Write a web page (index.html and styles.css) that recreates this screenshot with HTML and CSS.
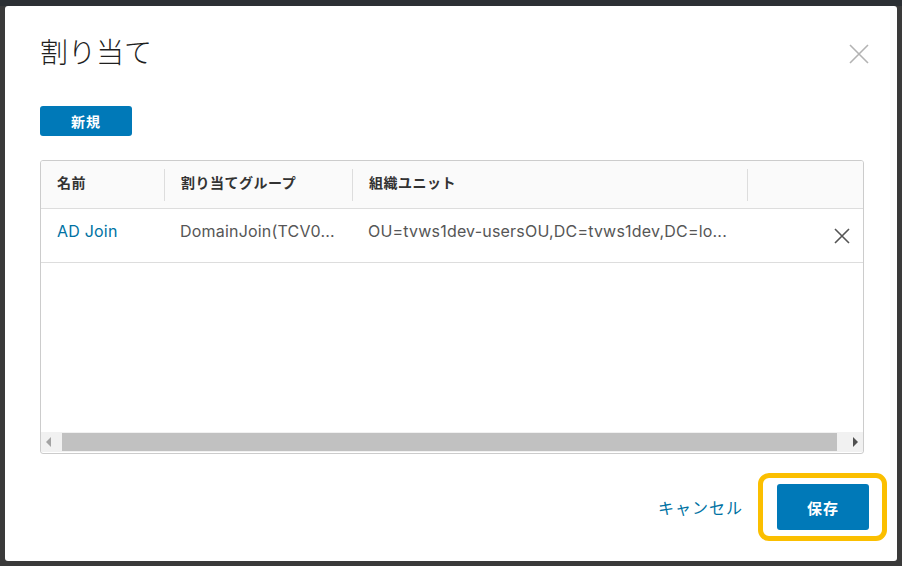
FILE: index.html
```html
<!DOCTYPE html>
<html lang="ja">
<head>
<meta charset="utf-8">
<title>割り当て</title>
<link rel="stylesheet" href="styles.css">
</head>
<body>
<div class="backdrop">
  <div class="dialog">
    <div class="dialog-header">
      <h1 class="title">割り当て</h1>
      <button class="close" aria-label="閉じる">
        <svg width="20" height="20" viewBox="0 0 20 20"><path d="M1 1L19 19M19 1L1 19" stroke="#b3b3b3" stroke-width="1.6" fill="none"/></svg>
      </button>
    </div>
    <div class="dialog-body">
      <button class="btn btn-small">新規</button>
      <div class="grid">
        <div class="grid-head">
          <div class="cell c1">名前</div>
          <div class="cell c2 sep">割り当てグループ</div>
          <div class="cell c3 sep">組織ユニット</div>
          <div class="cell c4 sep"></div>
        </div>
        <div class="grid-row">
          <div class="cell c1"><a class="link">AD Join</a></div>
          <div class="cell c2">DomainJoin(TCV0...</div>
          <div class="cell c3">OU=tvws1dev-usersOU,DC=tvws1dev,DC=lo...</div>
          <div class="cell c4 act">
            <svg width="16" height="16" viewBox="0 0 16 16"><path d="M1 1L15 15M15 1L1 15" stroke="#555" stroke-width="1.6" fill="none"/></svg>
          </div>
        </div>
        <div class="grid-fill"></div>
        <div class="hscroll">
          <span class="arrow left"></span>
          <span class="thumb"></span>
          <span class="arrow right"></span>
        </div>
      </div>
    </div>
    <div class="dialog-footer">
      <a class="link cancel">キャンセル</a>
      <div class="highlight">
        <button class="btn btn-save">保存</button>
      </div>
    </div>
  </div>
</div>
</body>
</html>
```
FILE: styles.css
```css
* { box-sizing: border-box; }
html, body { margin: 0; padding: 0; }
body {
  background: #3a3a3a;
  font-family: "Inter", "Noto Sans CJK JP", sans-serif;
  width: 902px;
  height: 566px;
  overflow: hidden;
}
.backdrop {
  width: 902px;
  height: 566px;
  padding: 6px 5px 5px 5px;
  background: linear-gradient(#2c3034 0, #2c3034 6px, #3a3a3a 6px);
}
.dialog {
  width: 892px;
  height: 555px;
  background: #fff;
  border-radius: 3px;
  padding: 0 33px 0 35px;
  display: flex;
  flex-direction: column;
}
.dialog-header {
  display: flex;
  justify-content: space-between;
  align-items: flex-start;
  padding-top: 26px;
}
.title {
  margin: 0;
  font-family: "Noto Sans CJK JP", sans-serif;
  font-weight: 300;
  font-size: 28px;
  line-height: 38px;
  color: #1f1f1f;
}
.close {
  border: 0;
  background: none;
  padding: 0;
  margin: 12px -5px 0 0;
  width: 20px;
  height: 20px;
  cursor: pointer;
}
.close svg { display: block; }
.dialog-body {
  padding-top: 36px;
}
.btn {
  border: 0;
  background: #0079b8;
  color: #fff;
  font-family: "Noto Sans CJK JP", sans-serif;
  font-weight: 700;
  border-radius: 3px;
  cursor: pointer;
  display: block;
}
.btn-small {
  width: 92px;
  height: 30px;
  font-size: 14px;
  letter-spacing: 1px;
}
.grid {
  margin-top: 24px;
  width: 824px;
  height: 294px;
  border: 1px solid #cccccc;
  border-radius: 3px;
  display: flex;
  flex-direction: column;
  overflow: hidden;
}
.grid-head {
  display: flex;
  height: 48px;
  background: #fafafa;
  border-bottom: 1px solid #dddddd;
  align-items: center;
  flex-shrink: 0;
}
.grid-head .cell {
  font-family: "Noto Sans CJK JP", sans-serif;
  font-weight: 700;
  font-size: 14px;
  letter-spacing: 0.5px;
  color: #333;
  height: 32px;
  line-height: 26px;
  padding-bottom: 6px;
}
.cell { padding-left: 16px; white-space: nowrap; overflow: hidden; }
.c1 { width: 123px; }
.c2 { width: 188px; }
.c3 { width: 395px; }
.c4 { flex: 1; }
.sep { border-left: 1px solid #dddddd; }
.grid-row {
  display: flex;
  height: 54px;
  border-bottom: 1px solid #dddddd;
  flex-shrink: 0;
  padding-top: 10px;
}
.grid-row .cell {
  font-size: 16px;
  letter-spacing: 0.2px;
  line-height: 24px;
  color: #565656;
}
.grid-row .c3 { width: 396px; }
.link { color: #0072a3; cursor: pointer; }
.act {
  display: flex;
  justify-content: flex-end;
  padding-right: 13px;
  padding-top: 9px;
}
.act svg { display: block; }
.grid-fill { flex: 1; }
.hscroll {
  height: 20px;
  background: #f1f1f1;
  display: flex;
  align-items: center;
  flex-shrink: 0;
  margin-bottom: 1px;
}
.arrow {
  width: 0;
  height: 0;
  border-top: 5px solid transparent;
  border-bottom: 5px solid transparent;
}
.arrow.left { border-right: 5px solid #a3a3a3; margin: 0 11px 0 5px; }
.arrow.right { border-left: 5px solid #505050; margin: 0 5px 0 16px; }
.thumb {
  flex: 1;
  height: 18px;
  background: #c1c1c1;
}
.dialog-footer {
  margin-top: auto;
  display: flex;
  justify-content: flex-end;
  align-items: center;
  padding-bottom: 20px;
  margin-right: -23px;
}
.cancel {
  font-family: "Noto Sans CJK JP", sans-serif;
  font-size: 16px;
  letter-spacing: 1px;
  margin-right: 15px;
}
.highlight {
  border: 5px solid #fbbf00;
  border-radius: 11px;
  padding: 6px 13px 6px 14px;
}
.btn-save {
  width: 92px;
  height: 46px;
  font-size: 15px;
  letter-spacing: 1px;
}
```
